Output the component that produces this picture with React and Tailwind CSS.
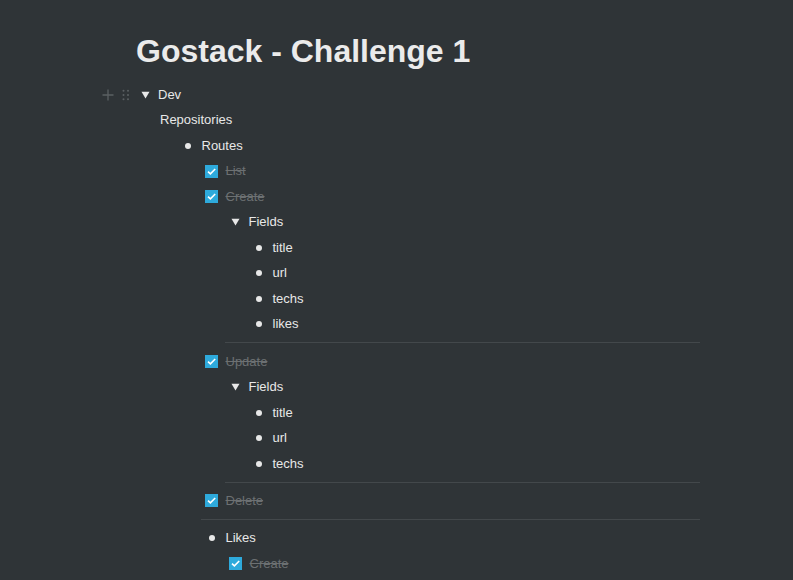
import React from 'react';

// Flat outline of the page; every row carries its own left offset
const rows = [
    { type: 'toggle', text: 'Dev', pad: 'pl-[102px]', handle: true },
    { type: 'text', text: 'Repositories', pad: 'pl-[160px]' },
    { type: 'bullet', text: 'Routes', pad: 'pl-[176px]' },
    { type: 'todo', text: 'List', pad: 'pl-[205px]' },
    { type: 'todo', text: 'Create', pad: 'pl-[205px]' },
    { type: 'toggle', text: 'Fields', pad: 'pl-[223.5px]' },
    { type: 'bullet', text: 'title', pad: 'pl-[247px]' },
    { type: 'bullet', text: 'url', pad: 'pl-[247px]' },
    { type: 'bullet', text: 'techs', pad: 'pl-[247px]' },
    { type: 'bullet', text: 'likes', pad: 'pl-[247px]' },
    { type: 'divider', line: 'ml-[225px] w-[475px]' },
    { type: 'todo', text: 'Update', pad: 'pl-[205px]' },
    { type: 'toggle', text: 'Fields', pad: 'pl-[223.5px]' },
    { type: 'bullet', text: 'title', pad: 'pl-[247px]' },
    { type: 'bullet', text: 'url', pad: 'pl-[247px]' },
    { type: 'bullet', text: 'techs', pad: 'pl-[247px]' },
    { type: 'divider', line: 'ml-[225px] w-[475px]' },
    { type: 'todo', text: 'Delete', pad: 'pl-[205px]' },
    { type: 'divider', line: 'ml-[201px] w-[499px]' },
    { type: 'bullet', text: 'Likes', pad: 'pl-[200px]' },
    { type: 'todo', text: 'Create', pad: 'pl-[229px]' },
];

const Plus = () => (
    <svg width="12" height="12" viewBox="0 0 12 12" className="shrink-0">
        <path d="M6 0.5v11M0.5 6h11" stroke="#5b6063" strokeWidth="1.3" fill="none" />
    </svg>
);

const Handle = () => (
    <svg width="8" height="12" viewBox="0 0 8 12" className="shrink-0">
        {[1.8, 6, 10.2].map(y => (
            <g key={y} fill="#5b6063">
                <circle cx="1.5" cy={y} r="1" />
                <circle cx="6" cy={y} r="1" />
            </g>
        ))}
    </svg>
);

const Triangle = () => (
    <svg width="9" height="8" viewBox="0 0 9 8">
        <path d="M0.5 0.8h8l-4 6.6z" fill="#e8e8e8" />
    </svg>
);

const Check = () => (
    <span className="w-[13px] h-[13px] shrink-0 bg-[#2eaadc] flex items-center justify-center">
        <svg width="11" height="11" viewBox="0 0 11 11">
            <path d="M2 5.6l2.4 2.3L9.2 3" stroke="#fff" strokeWidth="1.6" fill="none" />
        </svg>
    </span>
);

const Row = ({ row }) => {
    if (row.type === 'divider') {
        return (
            <div className="h-[11.75px] flex items-center">
                <div className={`${row.line} border-t border-[#43484b]`} />
            </div>
        );
    }
    return (
        <div className={`h-[25.5px] flex items-center ${row.pad}`}>
            {row.handle && (
                <div className="flex items-center">
                    <Plus />
                    <span className="ml-[8px]"><Handle /></span>
                    <span className="w-[3px]" />
                </div>
            )}
            {row.type === 'toggle' && (
                <>
                    <span className="w-[24px] flex justify-center"><Triangle /></span>
                    <span className="ml-[1px]">{row.text}</span>
                </>
            )}
            {row.type === 'text' && <span>{row.text}</span>}
            {row.type === 'bullet' && (
                <>
                    <span className="w-[24px] flex justify-center">
                        <span className="w-[6px] h-[6px] rounded-full bg-[#e8e8e8]" />
                    </span>
                    <span className="ml-[1.5px]">{row.text}</span>
                </>
            )}
            {row.type === 'todo' && (
                <>
                    <Check />
                    <span className="ml-[7.5px] text-[#6c7072] line-through decoration-[#6c7072]">{row.text}</span>
                </>
            )}
        </div>
    );
};

export default function App() {
    return (
        <div className="min-h-screen bg-[#2f3437] text-[#e8e8e8] font-['Liberation_Sans',Arial,sans-serif]">
            <h1 className="pl-[136px] pt-[32px] text-[32px] leading-[38px] font-bold text-[#ebebeb]">
                Gostack - Challenge 1
            </h1>
            <div className="mt-[12px] text-[13px] leading-[18px]">
                {rows.map((row, i) => <Row key={i} row={row} />)}
            </div>
        </div>
    );
}
